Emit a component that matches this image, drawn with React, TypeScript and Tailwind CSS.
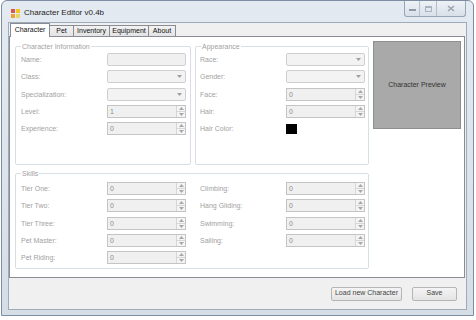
import React from 'react';

const font = { fontFamily: '"Liberation Sans", Arial, sans-serif' };

function SpinBox({ value }: { value: string }) {
  return (
    <div className="flex h-[13px] w-[79px] border border-[#c4c4c4] bg-[#f0f0f0]">
      <div className="flex-1 pl-[2px] text-[7px] leading-[11px] text-[#8c8c8c]">{value}</div>
      <div className="flex w-[9px] flex-col border-l border-[#d6d6d6] bg-[#f4f4f4]">
        <div className="flex flex-1 items-center justify-center border-b border-[#d6d6d6]">
          <svg width="5" height="3" viewBox="0 0 5 3">
            <path d="M0 3 L2.5 0 L5 3 Z" fill="#a8a8a8" />
          </svg>
        </div>
        <div className="flex flex-1 items-center justify-center">
          <svg width="5" height="3" viewBox="0 0 5 3">
            <path d="M0 0 L2.5 3 L5 0 Z" fill="#a8a8a8" />
          </svg>
        </div>
      </div>
    </div>
  );
}

function ComboBox() {
  return (
    <div className="flex h-[13px] w-[79px] items-center justify-end rounded-[2px] border border-[#cfcfcf] bg-[#f3f3f3] pr-[3px]">
      <svg width="5" height="3" viewBox="0 0 5 3">
        <path d="M0 0 L2.5 3 L5 0 Z" fill="#a0a0a0" />
      </svg>
    </div>
  );
}

function TextBox() {
  return <div className="h-[13px] w-[79px] rounded-[2px] border border-[#cfcfcf] bg-[#f0f0f0]" />;
}

function Row({ label, children }: { label: string; children: React.ReactNode }) {
  return (
    <div className="flex h-[13px] items-center">
      <div className="w-[86px] text-[7px] leading-[9px] text-[#a2a2a2]">{label}</div>
      {children}
    </div>
  );
}

function Group({ title, className, children }: { title: string; className: string; children: React.ReactNode }) {
  return (
    <fieldset className={`border border-[#d5dfe5] rounded-[2px] ${className}`}>
      <legend className="ml-[5px] px-[1px] text-[7px] leading-[9px] text-[#a2a2a2]">{title}</legend>
      {children}
    </fieldset>
  );
}

export default function App() {
  const tabs = ['Character', 'Pet', 'Inventory', 'Equipment', 'About'];
  const tabWidths = ['w-[40px]', 'w-[25px]', 'w-[37px]', 'w-[40px]', 'w-[28px]'];

  return (
    <div className="h-[320px] w-[476px] overflow-hidden bg-white" style={font}>
      <div className="ml-[1px] flex h-[316px] w-[473px] flex-col rounded-t-[6px] border border-[#7d8ea3] bg-gradient-to-b from-[#e4eaf1] to-[#d5dde7]">
        {/* Title bar */}
        <div className="flex h-[21px] items-start">
          <div className="ml-[9px] mt-[7px] flex items-center gap-[4px]">
            <svg width="9" height="9" viewBox="0 0 9 9">
              <rect x="0" y="0" width="4" height="4" fill="#d9534f" />
              <rect x="5" y="0" width="4" height="4" fill="#f0c419" />
              <rect x="0" y="5" width="4" height="4" fill="#f0a030" />
              <rect x="5" y="5" width="4" height="4" fill="#e8d36a" />
            </svg>
            <span className="text-[8px] leading-[10px] text-[#1e1e1e]">Character Editor v0.4b</span>
          </div>
          <div className="ml-auto mr-[7px] flex h-[16px] overflow-hidden rounded-b-[3px] border border-t-0 border-[#97a5b5] bg-gradient-to-b from-[#eef2f6] to-[#d8e0e9]">
            <div className="flex w-[15px] items-center justify-center border-r border-[#b3bfcc]">
              <div className="mt-[3px] h-[2px] w-[7px] border border-[#8d9aaa]" />
            </div>
            <div className="flex w-[17px] items-center justify-center border-r border-[#b3bfcc]">
              <div className="h-[6px] w-[7px] border border-[#a9b4c1] border-t-2" />
            </div>
            <div className="flex w-[28px] items-center justify-center">
              <svg width="8" height="7" viewBox="0 0 8 7">
                <path d="M1 1 L7 6 M7 1 L1 6" stroke="#9aa6b4" strokeWidth="1.6" />
              </svg>
            </div>
          </div>
        </div>

        {/* Client area */}
        <div className="ml-[6px] flex h-[288px] w-[459px] flex-col border border-[#9eabba] bg-[#f0f0f0]">
          {/* Tabs */}
          <div className="flex h-[13px] items-end pl-[1px]">
            {tabs.map((t, i) => (
              <div
                key={t}
                className={`flex items-center justify-center border border-b-0 border-[#898c95] text-[7px] text-[#111] ${tabWidths[i]} ${
                  i === 0
                    ? 'relative z-10 -mb-px h-[14px] bg-white'
                    : '-ml-px h-[11px] bg-gradient-to-b from-[#f2f2f2] to-[#e3e3e3]'
                }`}
              >
                {t}
              </div>
            ))}
          </div>

          {/* Tab page */}
          <div className="h-[242px] w-[456px] border border-[#898c95] bg-white pl-[5px] pt-[4px]">
            <div className="flex items-start">
              <Group title="Character Information" className="mt-[1px] h-[123px] w-[176px]">
                <div className="flex flex-col gap-[4.3px] pl-[5px] pt-[2px]">
                  <Row label="Name:"><TextBox /></Row>
                  <Row label="Class:"><ComboBox /></Row>
                  <Row label="Specialization:"><ComboBox /></Row>
                  <Row label="Level:"><SpinBox value="1" /></Row>
                  <Row label="Experience:"><SpinBox value="0" /></Row>
                </div>
              </Group>
              <Group title="Appearance" className="ml-[4px] mt-[1px] h-[123px] w-[174px]">
                <div className="flex flex-col gap-[4.3px] pl-[4px] pt-[2px]">
                  <Row label="Race:"><ComboBox /></Row>
                  <Row label="Gender:"><ComboBox /></Row>
                  <Row label="Face:"><SpinBox value="0" /></Row>
                  <Row label="Hair:"><SpinBox value="0" /></Row>
                  <Row label="Hair Color:">
                    <div className="h-[10px] w-[11px] bg-black" />
                  </Row>
                </div>
              </Group>
              <div className="ml-[4px] flex h-[88px] w-[88px] items-center justify-center border border-[#8e8e8e] bg-[#a9a9a9] text-[7px] text-[#333]">
                Character Preview
              </div>
            </div>

            <Group title="Skills" className="mt-[4px] h-[100px] w-[354px]">
              <div className="flex gap-[14px] pl-[5px] pt-[4px]">
                <div className="flex flex-col gap-[4.3px]">
                  <Row label="Tier One:"><SpinBox value="0" /></Row>
                  <Row label="Tier Two:"><SpinBox value="0" /></Row>
                  <Row label="Tier Three:"><SpinBox value="0" /></Row>
                  <Row label="Pet Master:"><SpinBox value="0" /></Row>
                  <Row label="Pet Riding:"><SpinBox value="0" /></Row>
                </div>
                <div className="flex flex-col gap-[4.3px]">
                  <Row label="Climbing:"><SpinBox value="0" /></Row>
                  <Row label="Hang Gliding:"><SpinBox value="0" /></Row>
                  <Row label="Swimming:"><SpinBox value="0" /></Row>
                  <Row label="Sailing:"><SpinBox value="0" /></Row>
                </div>
              </div>
            </Group>
          </div>

          {/* Bottom buttons */}
          <div className="flex flex-1 items-center justify-end gap-[10px] pr-[9px]">
            <button className="h-[14px] w-[71px] rounded-[2px] border border-[#b5b5b5] bg-gradient-to-b from-[#f4f4f4] to-[#e4e4e4] text-[7px] text-[#444]">
              Load new Character
            </button>
            <button className="h-[14px] w-[45px] rounded-[2px] border border-[#b5b5b5] bg-gradient-to-b from-[#f4f4f4] to-[#e4e4e4] text-[7px] text-[#444]">
              Save
            </button>
          </div>
        </div>
      </div>
    </div>
  );
}
